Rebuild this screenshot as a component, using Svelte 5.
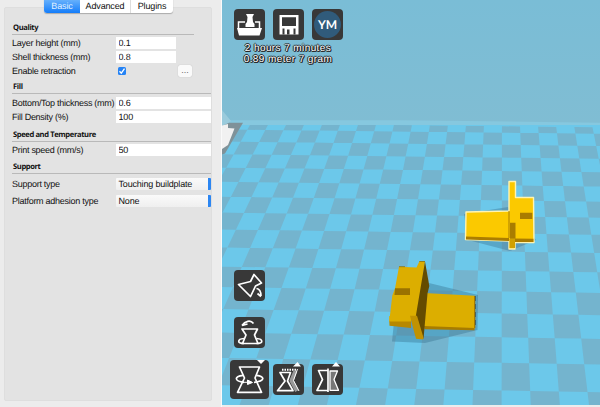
<script>
  // Known floor vertices: [column, row, x, y] in scene pixels.
  const anchors = [
    [1, 1, 240, 142.3], [2, 2, 252.3, 154.3], [3, 3, 265, 168], [4, 4, 279.3, 182.7],
    [5, 5, 294, 197.7], [6, 6, 309, 214], [7, 7, 325, 230.7], [8, 8, 342, 248.7],
    [10, 2, 405, 156.5], [12, 2, 444, 156.8], [14, 2, 482, 157.3], [16, 2, 522, 157.8],
    [8, 10, 329.3, 288.5], [9, 10, 354.3, 289], [9, 11, 348.3, 311], [9, 12, 342.5, 334.8],
    [14, 12, 475.5, 337], [16, 12, 528.3, 338], [17, 12, 554.5, 338.4], [13, 13, 448.3, 362.3],
    [15, 13, 502, 363], [16, 13, 528.7, 363.3], [17, 13, 555.5, 363.7], [15, 14, 502.3, 390]
  ];

  // Least-squares fit of the eight perspective coefficients.
  function fit(points) {
    const m = Array.from({ length: 8 }, () => Array(9).fill(0));
    for (const [u, v, x, y] of points) {
      for (const r of [[u, v, 1, 0, 0, 0, -u * x, -v * x, x], [0, 0, 0, u, v, 1, -u * y, -v * y, y]]) {
        for (let i = 0; i < 8; i++) for (let j = 0; j < 9; j++) m[i][j] += r[i] * r[j];
      }
    }
    for (let i = 0; i < 8; i++) {
      let p = i;
      for (let k = i + 1; k < 8; k++) if (Math.abs(m[k][i]) > Math.abs(m[p][i])) p = k;
      [m[i], m[p]] = [m[p], m[i]];
      for (let k = 0; k < 8; k++) {
        if (k === i) continue;
        const f = m[k][i] / m[i][i];
        for (let j = i; j < 9; j++) m[k][j] -= f * m[i][j];
      }
    }
    return m.map((row, i) => row[8] / row[i]);
  }

  const h = fit(anchors);
  const project = (u, v) => {
    const w = h[6] * u + h[7] * v + 1;
    return [(h[0] * u + h[1] * v + h[2]) / w, (h[3] * u + h[4] * v + h[5]) / w];
  };
  let path = '';
  for (let v = -1; v < 16; v++) {
    for (let u = -10; u < 30; u++) {
      if ((u + v) % 2 !== 0) continue;
      const top = v < 0 ? -0.55 : v;
      path += 'M' + [[u, top], [u + 1, top], [u + 1, v + 1], [u, v + 1]]
        .map(([a, b]) => project(a, b).map((n) => n.toFixed(1)).join(' ')).join('L') + 'Z';
    }
  }

  let retraction = $state(true);
</script>

<main>
  <aside>
    <nav><button class="on">Basic</button><button>Advanced</button><button>Plugins</button></nav>
    <section class="panel">
      <h2 class="short">Quality</h2>
      <div class="row r1"><label for="lh">Layer height (mm)</label><input id="lh" class="small" value="0.1" /></div>
      <div class="row r2"><label for="st">Shell thickness (mm)</label><input id="st" class="small" value="0.8" /></div>
      <div class="row r3">
        <span>Enable retraction</span>
        <button class="check" aria-label="Enable retraction" onclick={() => (retraction = !retraction)}>
          {#if retraction}<svg viewBox="0 0 8 8"><path d="M1.5 4.2 3.3 6.2 6.5 1.6" /></svg>{/if}
        </button>
        <button class="more">...</button>
      </div>
      <h2 class="fill">Fill</h2>
      <div class="row r4"><label for="bt">Bottom/Top thickness (mm)</label><input id="bt" value="0.6" /></div>
      <div class="row r5"><label for="fd">Fill Density (%)</label><input id="fd" value="100" /></div>
      <h2 class="speed">Speed and Temperature</h2>
      <div class="row r6"><label for="ps">Print speed (mm/s)</label><input id="ps" value="50" /></div>
      <h2 class="support">Support</h2>
      <div class="row r7"><span>Support type</span><div class="select">Touching buildplate</div></div>
      <div class="row r8"><span>Platform adhesion type</span><div class="select">None</div></div>
    </section>
  </aside>

  <div class="scene">
    <svg class="world" viewBox="222 0 378 405">
      <defs>
        <linearGradient id="sky" x1="0" y1="0" x2="0" y2="1"><stop stop-color="#7abdd6" /><stop offset="1" stop-color="#80bdd3" /></linearGradient>
      </defs>
      <rect x="222" width="378" height="124" fill="url(#sky)" />
      <path d="M222 121.5H400L600 124.5V405H222Z" fill="#6cc8ea" />
      <path d={path} fill="#74b4ce" />
      <path d="M222 120.2H400L600 122.7V125H222Z" fill="#86c8df" />
      <path d="M222 110 231 121 222 128Z" fill="#9acbdc" />
      <path d="M229 122.700h14L225 153.500l-3 1V126Z" fill="#7f9299" />
      <path d="M222 125.500 228 124v4l6.500.5L228 145l-6 4Z" fill="#f1f1f1" />

      <path d="M464 214 508 207 536 240 510 251 468 240Z" fill="#3e7797" opacity=".42" />
      <path d="M466 212 509 211V181.500h6.500V197.500H533.500L534 242.500H515V249H509V241L465.500 239.500Z" fill="#fbc900" stroke="#fff4b0" stroke-width="1.4" stroke-linejoin="round" />
      <path d="M466 236.500 509 238v3l-43-1.500ZM515 238.500l18.500.3V242H515Z" fill="#ab7d00" />
      <path d="M508.500 211h1v27h-1ZM510 222.700h5.500v16H510ZM520 212.700h12.300v6.300H520Z" fill="#a97c00" />
      <path d="M509.500 239h5.500v9h-5.500Z" fill="#d0a000" />

      <path d="M429 283 478 295 477.500 330 425 343 392 341.500 394 322Z" fill="#38708e" opacity=".4" />
      <path d="M424 293 475 295.700 474.500 329 423.500 327Z" fill="#dcae00" />
      <path d="M424 326 474.500 328v2.200l-50-1ZM474 296h1.300v32H474Z" fill="#a77c00" />
      <path d="M475.500 296V328" stroke="#384e54" stroke-width=".7" stroke-dasharray="5 3" />
      <path d="M399 266.700 416.500 267.500 419.300 261.500H425L417 318H411L389.300 321 392.300 295.500 395 288.500Z" fill="#dcae00" />
      <path d="M389.300 321 411 319V328L389.500 325.800Z" fill="#b78800" />
      <path d="M389.300 316H411V321.500H389.300Z" fill="#dcae00" />
      <path d="M395 288.300H410V295H394.500Z" fill="#9a7200" />
      <path d="M425 261.500 429.300 286 427.500 293.500 423.500 339 415.500 318Z" fill="#644b00" />
      <path d="M410 315.700h7l6.500 22-.5 1.800-7-.8-4-15Z" fill="#c19200" />
      <path d="M419.300 261.500h5.700M399 266.700h6" stroke="#8e7000" stroke-width=".8" fill="none" />
    </svg>

    <div class="tools">
      <button class="tool" aria-label="Load"><svg viewBox="0 0 31 31"><path d="M12 5h8l-1.500 3 .5 5 1.500 2v3h-9v-3l1.500-2 .5-5Z" fill="#fff" /><path d="M4.500 19V13h6.500M21 13h4.500v6" fill="none" stroke="#fff" stroke-width="1.500" /><path d="M3 19h25l-2.500 7.500H5Z" fill="#fff" /></svg></button>
      <button class="tool" aria-label="Save"><svg viewBox="0 0 31 31"><path d="M6.500 6h19v19.500h-19Z" fill="#fff" /><path d="M9 8.200h14v8.800H9ZM9.500 19.500h2v6h-2ZM20.500 19.500h2v6h-2ZM14 20.500h2.500v5H14Z" fill="#383838" /></svg></button>
      <button class="tool ym"><span>YM</span></button>
    </div>
    <div class="estimate">2 hours 7 minutes<br />0.89 meter 7 gram</div>

    <div class="rotations">
      <button class="tool" aria-label="Lay flat"><svg viewBox="0 0 31 31" class="line"><path d="M4.500 14.500 16.500 11.500 20 4.500 27.500 13 21.500 16 16.500 26.500Z" /><path d="M22.500 18.500c3.500.5 4.500 3 4.500 7.500M23.500 23.500l3.500 3" /></svg></button>
      <button class="tool" aria-label="Reset"><svg viewBox="0 0 31 31" class="line"><path d="M8 8.500C11 4 16.500 2.500 19.500 6.500M8 8.500l5.500-1.500" /><path d="M8 12h15.500l-3 6 3.500 8.500H8.500L12 18Z" /><path d="M10 21.500c-7 .5-7 5 0 5M22.500 21.500c7 .5 7 5 0 5" /></svg></button>
    </div>
    <div class="bottom">
      <button class="tool big" aria-label="Rotate"><svg viewBox="0 0 39 39" class="line"><path d="M9.500 7H29.500L25 18 31.500 32.300H7.500L14.500 18Z" /><path d="M13 15.300c-9 1-9 6 1 7M26.500 15.300c9 1 8.500 6-2.500 7" /><path d="M13 22.300h9M17.500 20l5 2.500-5 2Z" fill="#fff" stroke-width="1" /></svg></button>
      <button class="tool" aria-label="Scale"><svg viewBox="0 0 31 31" class="line"><path d="M7 8.500h10.500L14.500 17l5.500 9.700H4.500L12 17Z" /><path d="M9 5.800h14.500" stroke-dasharray="1.500 1" stroke-width="2" /><path d="M22.500 7 18.500 16.500 24 27" stroke="#999" stroke-width="4" /><path d="M24.500 5 20.500 16.500 26 27" stroke-width="1" /></svg></button>
      <button class="tool" aria-label="Mirror"><svg viewBox="0 0 31 31" class="line"><path d="M16 4.500v23.500M16 6.500H6.500L10.500 15.500 5 26.500H16" /><path d="M18 7h7.500L22 15.500 26.500 26.300H18Z" fill="#777" stroke-width="1.300" /></svg></button>
      <svg class="marks" viewBox="0 0 114 8"><path d="M30 1h8l-4 4ZM66 7.500l4.500-4.500L74 7.500ZM105 7.500l4-4.500 4 4.500Z" fill="#fff" /></svg>
    </div>
  </div>
</main>

<style>
  :global(body) { margin: 0; overflow: hidden; }
  main { display: flex; width: 600px; height: 407px; background: #ececec; font-family: "Liberation Sans", Arial, sans-serif; font-size: 9px; color: #111; text-rendering: geometricPrecision; }
  button, input { font: inherit; color: inherit; border: 0; padding: 0; margin: 0; text-rendering: inherit; }
  aside { box-sizing: border-box; width: 222px; padding: 0 9px 0 4px; border-right: 1px solid #fafafa; }
  nav { position: relative; display: flex; width: 129px; height: 13px; margin: 0 0 0 40px; background: #fff; border-radius: 0 0 3px 3px; box-shadow: 0 .5px 1px #aaa; }
  nav button { height: 13px; width: 42px; background: none; font-size: 9px; letter-spacing: -.15px; line-height: 13px; white-space: nowrap; }
  nav button:nth-child(2) { width: 51px; border-right: 1px solid #ddd; }
  nav .on { width: 36px; background: linear-gradient(#66b0fc, #147dfa); color: #e0f2ff; border-radius: 0 0 0 3px; }
  .panel { box-sizing: border-box; height: 394px; margin-top: -6px; padding: 14px 0 0 7px; background: #e3e3e3; border: 1px solid #dedede; border-radius: 2px; }
  h2 { box-sizing: border-box; height: 13px; margin: 0; padding-left: 1px; font: bold 7.600px/13px "Open Sans", sans-serif; letter-spacing: -.39px; border-bottom: 1px solid #b9b9b9; }
  h2.short { width: 182px; }
  .row { display: grid; grid-template-columns: 104px 1fr; align-items: center; height: 13px; white-space: nowrap; }
  .row label, .row > span { font-size: 9px; letter-spacing: -.27px; }
  .row input, .select { box-sizing: border-box; width: 100%; height: 12px; padding: 1px 0 0 2.500px; background: #fff; outline: none; line-height: 11px; letter-spacing: -.18px; }
  .row input.small { width: 60px; }
  .r1 { margin-top: 1px; }
  .r2 { margin-top: 1px; }
  .r3 { grid-template-columns: 105px 1fr 14px 19px; margin-top: 1px; }
  .check { width: 8px; height: 8px; margin-left: 1px; background: #2583f5; border-radius: 1.500px; }
  .check svg { display: block; width: 8px; height: 8px; fill: none; stroke: #fff; stroke-width: 1.300; }
  .more { width: 14px; height: 12px; background: #fafafa; border-radius: 2px; line-height: 7px; box-shadow: 0 0 1px #aaa; color: #666; }
  .fill { margin-top: 4px; }
  .r4 { margin-top: 2px; }
  .r5 { margin-top: 1px; }
  .speed { margin-top: 6px; }
  .r6 { margin-top: 1px; }
  .support { margin-top: 5px; }
  .r7 { margin-top: 3px; }
  .r8 { margin-top: 4px; }
  .select { background: linear-gradient(#fafafa, #efefef); border-right: 3.500px solid #2c86f2; border-radius: 1px; }

  .scene { position: relative; box-sizing: border-box; width: 378px; height: 405px; padding: 9px 0 0 12px; overflow: hidden; }
  .world { position: absolute; left: 0; top: 0; width: 378px; height: 405px; }
  .tools { position: relative; display: flex; gap: 8px; }
  .tool { display: block; width: 31px; height: 31px; background: #383838; border-radius: 4px; }
  .tool svg { display: block; width: 100%; height: 100%; }
  .line { fill: none; stroke: #fff; stroke-width: 1.700; stroke-linejoin: round; }
  .ym span { display: block; width: 27px; height: 27px; margin: 2px; border-radius: 50%; background: #305b7b; color: #fff; font: bold 12px/27px Lato, sans-serif; text-align: center; }
  .estimate { position: relative; width: 108px; margin-top: 3px; text-align: center; color: #fff; font-size: 10px; line-height: 11px; letter-spacing: .4px; text-shadow: 1px 0 #222, -1px 0 #222, 0 1px #222, 0 -1px #222, 1px 1px #222; white-space: nowrap; }
  .rotations { position: relative; display: flex; flex-direction: column; gap: 16px; margin-top: 205px; }
  .bottom { position: relative; display: flex; align-items: center; gap: 4px; margin: 12px 0 0 -4px; }
  .bottom .tool + .tool + .tool { margin-left: 4px; }
  .tool.big { width: 39px; height: 39px; }
  .marks { position: absolute; left: -3px; top: -1px; width: 114px; height: 8px; }
</style>
